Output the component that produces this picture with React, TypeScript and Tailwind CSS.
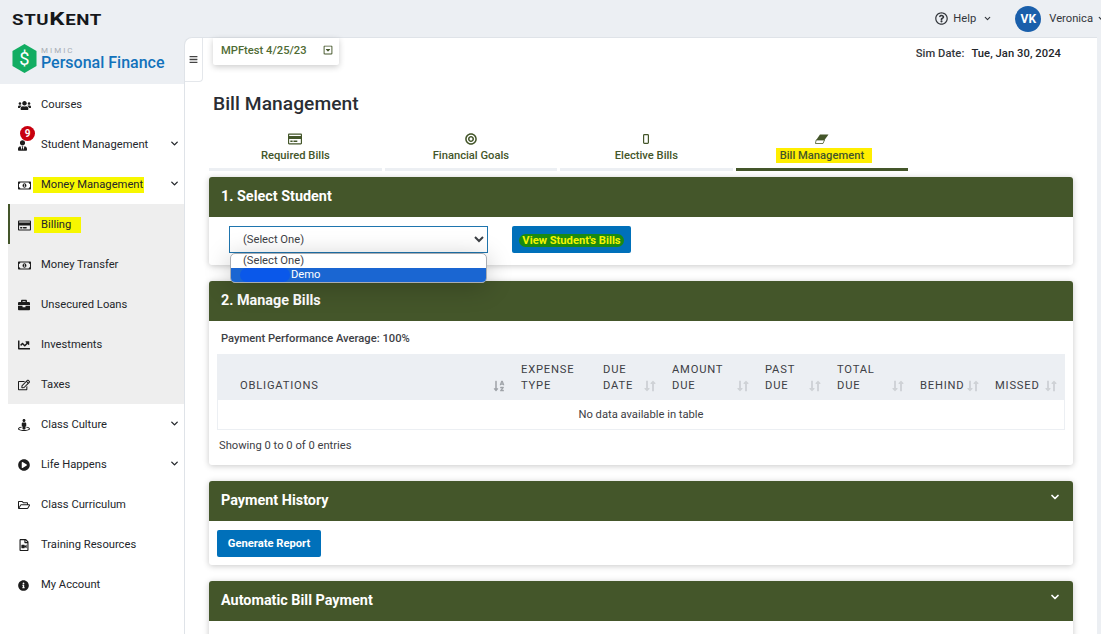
import React from 'react';
import { ChevronDown } from 'lucide-react';
import {
  FaUsers, FaUserTie, FaRegMoneyBillAlt, FaRegCreditCard, FaBriefcase, FaChartLine, FaRegEdit,
  FaStreetView, FaPlayCircle, FaRegFolderOpen, FaRegFileVideo, FaInfoCircle, FaRegQuestionCircle,
  FaBullseye, FaRegCaretSquareDown, FaBars,
  FaLongArrowAltDown, FaLongArrowAltUp, FaSortAlphaDown,
} from 'react-icons/fa';

const font = { fontFamily: 'Roboto, "Liberation Sans", sans-serif' };

function SideItem({
  icon,
  label,
  chevron,
  sub,
  active,
  mark,
  badge,
}: {
  icon: React.ReactNode;
  label: string;
  chevron?: boolean;
  sub?: boolean;
  active?: boolean;
  mark?: string;
  badge?: string;
}) {
  const indent = active ? 'border-l-2 border-[#44562a] pl-[8px]' : sub ? 'pl-[10px]' : 'pl-[18px]';
  return (
    <div className={`relative flex h-10 items-center pt-[2px] text-[11.2px] text-[#23262b] ${indent}`}>
      <span className="flex w-[23px] items-center text-[12px] text-[#1c1c1c]">{icon}</span>
      {mark ? <span className={`bg-[#f7f700] ${mark}`}>{label}</span> : <span>{label}</span>}
      {chevron && <ChevronDown className="absolute right-[4px] top-[14px] h-[11px] w-[11px]" strokeWidth={3} />}
      {badge && (
        <span className="absolute left-[20px] top-[2px] flex h-[15px] w-[15px] items-center justify-center rounded-full bg-[#c8000f] text-[10px] font-bold text-white">
          {badge}
        </span>
      )}
    </div>
  );
}

function Sidebar() {
  return (
    <aside className="flex w-[184px] shrink-0 flex-col">
      <div className="flex h-[47px] items-start bg-[#eceff3] pl-[12px] pt-[7px]">
        <svg viewBox="0 0 26 30" className="h-[29px] w-[25px]">
          <path d="M13 0 L25.5 7.3 V22.7 L13 30 L0.5 22.7 V7.3 Z" fill="#12ad62" />
          <text x="13" y="21.5" textAnchor="middle" fontSize="19" fill="#fff" fontFamily="Roboto">$</text>
        </svg>
        <div className="ml-[4px] flex flex-col">
          <span className="mt-[2px] text-[8px] leading-[9px] tracking-[2px] text-[#a7adb3]">MIMIC</span>
          <span className="-mt-[1px] text-[16px] font-medium leading-[18px] text-[#1272bb]">Personal Finance</span>
        </div>
      </div>
      <nav className="flex-1 bg-white">
        <SideItem icon={<FaUsers className="h-[13px] w-[13px]" />} label="Courses" />
        <SideItem icon={<FaUserTie className="h-[11px] w-[9px]" />} label="Student Management" chevron badge="9" />
        <SideItem icon={<FaRegMoneyBillAlt className="h-[13px] w-[13px]" />} label="Money Management" chevron mark="-ml-[8px] pl-[8px] pr-[1px]" />
        <div className="ml-[8px] bg-[#eeeeee]">
          <SideItem sub active icon={<FaRegCreditCard className="h-[13px] w-[13px]" />} label="Billing" mark="-ml-[7px] pl-[7px] pr-[10px]" />
          <SideItem sub icon={<FaRegMoneyBillAlt className="h-[13px] w-[13px]" />} label="Money Transfer" />
          <SideItem sub icon={<FaBriefcase />} label="Unsecured Loans" />
          <SideItem sub icon={<FaChartLine />} label="Investments" />
          <SideItem sub icon={<FaRegEdit />} label="Taxes" />
        </div>
        <SideItem icon={<FaStreetView />} label="Class Culture" chevron />
        <SideItem icon={<FaPlayCircle />} label="Life Happens" chevron />
        <SideItem icon={<FaRegFolderOpen />} label="Class Curriculum" />
        <SideItem icon={<FaRegFileVideo />} label="Training Resources" />
        <SideItem icon={<FaInfoCircle className="h-[11px] w-[11px]" />} label="My Account" />
      </nav>
    </aside>
  );
}

function Tab({ icon, label, active }: { icon: React.ReactNode; label: React.ReactNode; active?: boolean }) {
  return (
    <div className="flex h-[41px] w-[172.75px] flex-col items-center">
      <span className="mt-[2px] flex h-[13px] items-center text-[12px] text-[#44562a]">{icon}</span>
      <span className="mt-[3px] h-[15px] text-[11.2px] font-medium leading-[15px] text-[#44562a]">{label}</span>
      <span className={`mt-auto h-[3px] w-full ${active ? 'bg-[#44562a]' : 'bg-[#eceff3]'}`} />
    </div>
  );
}

function Card({ title, chevron, children }: { title: string; chevron?: boolean; children?: React.ReactNode }) {
  return (
    <section className="rounded-[3px] bg-white shadow-[0_1px_6px_rgba(0,0,0,0.22)]">
      <div className="relative flex h-10 items-center rounded-t-[3px] bg-[#44562a] pl-3 text-[14.4px] font-bold text-white">
        {title}
        {chevron && <ChevronDown className="absolute right-[12px] top-[10px] h-[12px] w-[12px]" strokeWidth={3.5} />}
      </div>
      {children}
    </section>
  );
}

function Sort({ alpha }: { alpha?: boolean }) {
  if (alpha) {
    return <FaSortAlphaDown className="mb-[2px] h-[12px] w-[12px] shrink-0 text-[#9fa3a8]" />;
  }
  return (
    <span className="mb-[2px] flex shrink-0 text-[#cfd2d6]">
      <FaLongArrowAltDown className="h-[12px] w-[6px]" />
      <FaLongArrowAltUp className="h-[12px] w-[6px]" />
    </span>
  );
}

const columns = [
  { lines: ['OBLIGATIONS'], width: 'w-[296px]', pad: 'pl-[23px]', alpha: true },
  { lines: ['EXPENSE', 'TYPE'], width: 'w-[82px]', pad: 'pl-[8px]', none: true },
  { lines: ['DUE', 'DATE'], width: 'w-[69px]', pad: 'pl-[8px]' },
  { lines: ['AMOUNT', 'DUE'], width: 'w-[93px]', pad: 'pl-[8px]' },
  { lines: ['PAST', 'DUE'], width: 'w-[72px]', pad: 'pl-[8px]' },
  { lines: ['TOTAL', 'DUE'], width: 'w-[83px]', pad: 'pl-[8px]' },
  { lines: ['BEHIND'], width: 'w-[75px]', pad: 'pl-[8px]' },
  { lines: ['MISSED'], width: 'w-[78px]', pad: 'pl-[8px]' },
];

function BillsTable() {
  return (
    <table className="w-[848px] table-fixed border-separate border-spacing-0 text-[11.2px] text-[#3d4045]">
      <thead>
        <tr className="h-[46px] bg-[#eceff3]">
          {columns.map((c) => (
            <th key={c.lines[0]} className={`${c.width} ${c.pad} pb-[6px] pr-[8px] text-left align-bottom font-normal tracking-[0.8px]`}>
              <div className="flex items-end justify-between leading-[16px]">
                <span>
                  {c.lines.map((l, i) => (
                    <React.Fragment key={l}>
                      {i > 0 && <br />}
                      {l}
                    </React.Fragment>
                  ))}
                </span>
                {!c.none && <Sort alpha={c.alpha} />}
              </div>
            </th>
          ))}
        </tr>
      </thead>
      <tbody>
        <tr className="h-[30px]">
          <td colSpan={8} className="border-x border-b border-[#eceff3] pt-[2px] text-center">No data available in table</td>
        </tr>
      </tbody>
    </table>
  );
}

export default function App() {
  return (
    <div className="flex h-[634px] w-[1101px] flex-col overflow-hidden bg-[#eceff3]" style={font}>
      <header className="relative flex h-[37px] shrink-0 items-center pl-[12px] text-[#33363b]">
        <span className="origin-left scale-x-[1.33] text-[14px] font-bold leading-none tracking-[0.5px] text-[#15171a]">
          STU<span className="text-[18px]">K</span>ENT
        </span>
        <div className="ml-auto -mr-[5px] flex items-center text-[11.2px]">
          <FaRegQuestionCircle className="h-[13px] w-[13px]" />
          <span className="ml-[5px] mt-[1px]">Help</span>
          <ChevronDown className="ml-[7px] h-[9px] w-[9px]" strokeWidth={3} />
          <span className="ml-[23px] flex h-[26px] w-[26px] items-center justify-center rounded-full bg-[#1a5fab] text-[12px] font-bold text-white">VK</span>
          <span className="ml-[8px] mt-[1px]">Veronica</span>
          <ChevronDown className="ml-[4px] h-[9px] w-[9px]" strokeWidth={3} />
        </div>
      </header>
      <div className="flex min-h-0 flex-1">
        <Sidebar />
        <main className="mr-[4px] min-w-0 flex-1 rounded-tl-[8px] border-l border-t border-[#dfe3e8] bg-white">
          <div className="flex h-[44px] items-start">
            <div className="flex h-[44px] w-[18px] items-center justify-center rounded-br-[4px] border-b border-r border-[#e4e7eb] text-[#444]">
              <FaBars className="h-[9px] w-[9px]" />
            </div>
            <div className="ml-[10px] flex h-[27px] w-[126px] items-center rounded-b-[2px] pl-[8px] pr-[6px] text-[11.2px] font-medium text-[#4f6b34] shadow-[0_2px_6px_rgba(0,0,0,0.2)]">
              MPFtest 4/25/23
              <FaRegCaretSquareDown className="-mt-[3px] ml-auto h-[10px] w-[10px] text-[#44562a]" />
            </div>
            <div className="ml-auto mr-[36px] mt-[8px] text-[11.2px] font-medium tracking-[0.06px] text-[#33363b]">
              Sim Date:
              <span className="ml-[7px] text-[#23262b]">Tue, Jan 30, 2024</span>
            </div>
          </div>
          <div className="px-[24px]">
            <h1 className="ml-[4px] mt-[10px] text-[19.2px] font-medium leading-[24px] tracking-[0.05px] text-[#2a2d33]">Bill Management</h1>
            <div className="mt-[14px] flex gap-[2.75px]">
              <Tab icon={<FaRegCreditCard className="h-[14px] w-[14px]" />} label="Required Bills" />
              <Tab icon={<FaBullseye className="h-[12px] w-[12px]" />} label="Financial Goals" />
              <Tab
                icon={
                  <svg viewBox="0 0 6 10" className="h-[10px] w-[6px]">
                    <rect x="0.6" y="0.6" width="4.8" height="8.8" rx="0.8" fill="none" stroke="currentColor" strokeWidth="1.2" />
                  </svg>
                }
                label="Elective Bills"
              />
              <Tab
                active
                icon={
                  <svg viewBox="0 0 14 10" className="h-[10px] w-[14px]">
                    <path d="M5 0.5 H13.5 L9.5 6 H1.2 Z" fill="currentColor" />
                    <path d="M1.2 6 H9.5 L8 9.5 H0.4 Z" fill="#fff" stroke="currentColor" strokeWidth="0.8" />
                  </svg>
                }
                label={<span className="ml-[4px] block bg-[#ffee00] pl-[4px] pr-[8px]">Bill Management</span>}
              />
            </div>
            <div className="mt-[6px] flex flex-col gap-4">
              <Card title="1. Select Student">
                <div className="relative z-10 flex h-[48px] items-start pl-[20px] pt-[9px]">
                  <select className="h-[27px] w-[259px] rounded-none border border-[#1f75ae] bg-white pl-[9px] text-[11.2px] text-[#3d4045]">
                    <option>(Select One)</option>
                    <option>Demo</option>
                  </select>
                  <button className="ml-[24px] flex h-[27px] w-[119px] items-center justify-center rounded-[2px] bg-[#0070ba] pt-[1px] text-[11.2px] font-bold text-[#f4f400]">
                    <span className="rounded-full bg-[#1a8a12] px-[3px] leading-[13px]">View Student's Bills</span>
                  </button>
                  <div className="absolute left-[21px] top-[36px] w-[257px] overflow-hidden rounded-[5px] border border-[#a9adb3] bg-white text-[11.2px] leading-[14px] text-[#3d4045] shadow-[0_4px_26px_rgba(0,0,0,0.22)]">
                    <div className="pl-[12px]">(Select One)</div>
                    <div className="relative bg-[#1a66d2] pl-[60px] text-white">
                      Demo
                      <span className="absolute left-[9px] top-0 h-[14px] w-[50px] rounded-full bg-[#0a58ea]" />
                    </div>
                  </div>
                </div>
              </Card>
              <Card title="2. Manage Bills">
                <div className="h-[144px] px-[8px]">
                  <p className="ml-[4px] h-[33px] pt-[11px] text-[11.2px] font-medium leading-[14px] text-[#3d4045]">Payment Performance Average: 100%</p>
                  <BillsTable />
                  <p className="ml-[2px] mt-[9px] text-[11.2px] leading-[14px] text-[#3d4045]">Showing 0 to 0 of 0 entries</p>
                </div>
              </Card>
              <Card title="Payment History" chevron>
                <div className="h-[44px] pl-[8px] pt-[9px]">
                  <button className="h-[27px] w-[104px] rounded-[2px] bg-[#0070ba] pt-[1px] text-[11.2px] font-bold text-white">Generate Report</button>
                </div>
              </Card>
              <Card title="Automatic Bill Payment" chevron>
                <div className="h-[40px]" />
              </Card>
            </div>
          </div>
        </main>
      </div>
    </div>
  );
}
